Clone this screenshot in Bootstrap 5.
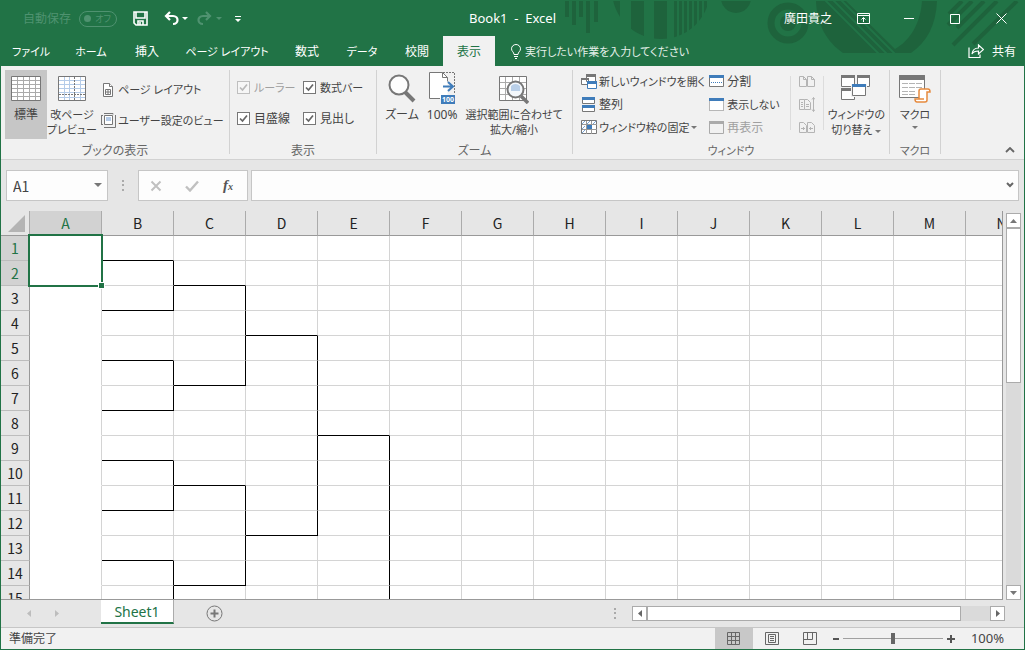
<!DOCTYPE html>
<html lang="ja">
<head>
<meta charset="utf-8">
<meta name="viewport" content="width=device-width, initial-scale=1">
<title>Book1 - Excel</title>
<link href="https://cdn.jsdelivr.net/npm/bootstrap@5.3.0/dist/css/bootstrap.min.css" rel="stylesheet">
<style>
  :root { --xl: #217346; --xl-dark: #1e633c; --line: #d4d4d4; --ink: #444; }
  body { font: 12px/15px "Noto Sans", "Noto Sans CJK JP", sans-serif; font-feature-settings: "palt"; color: var(--ink); }
  button, input { font: inherit; font-feature-settings: inherit; color: inherit; border: 0; background: none; padding: 0; border-radius: 0; }
  svg { display: block; flex: none; }
  .app { border: 1px solid var(--xl); background: #e6e6e6; }
  .nowrap { white-space: nowrap; }

  /* title bar and tabs */
  .top { background: var(--xl); color: #fff; height: 65px; }
  .deco { position: absolute; top: 0; right: 0; }
  .titlebar { display: grid; grid-template-columns: 1fr auto 1fr; height: 35px; }
  .doc-title { font-size: 13px; white-space: pre; }
  .autosave { color: #4f9270; margin-left: 22px; }
  .toggle { width: 38px; height: 16px; border: 1px solid #4f9270; border-radius: 8px; font-size: 9px; color: #4f9270; padding: 0 5px 0 4px; }
  .toggle i { width: 7px; height: 7px; border-radius: 50%; background: #4f9270; }
  .winbtn { width: 46px; height: 32px; }
  .tabs { height: 30px; }
  .tab { height: 30px; color: #fff; text-decoration: none; width: 52px; }
  .tab-m { width: 60px; }
  .tab-d { width: 58px; }
  .tab-l { width: 108px; }
  .tab.active { background: #f1f1f1; color: var(--xl); }
  .tell { color: #e6f0ea; font-size: 11px; }

  /* ribbon */
  .ribbon { background: #f1f1f1; height: 94px; border-bottom: 1px solid #d2d2d2; }
  .group { margin: 4px 0 5px; border-right: 1px solid #d2d2d2; }
  .group-body { height: 73px; }
  .group-name { color: #666; height: 15px; }
  .g-view { width: 229px; } .g-show { width: 147px; } .g-zoom { width: 196px; } .g-win { width: 317px; } .g-macro { width: 51px; }
  .big { height: 69px; display: flex; flex-direction: column; align-items: center; flex: none; white-space: nowrap; }
  .big .pic { height: 37px; display: flex; align-items: center; justify-content: center; flex: none; }
  .big.on { background: #c6c6c6; width: 42px; }
  .kana { font-size: 11px; }
  .row-btn { display: flex; align-items: center; white-space: nowrap; height: 23px; gap: 2px; }
  .tall { height: 31px; }
  .tall svg { width: 15px; }
  .off { color: #a0a0a0; }
  .caret { display: inline-block; border: 3px solid transparent; border-top-color: #777; border-bottom: 0; vertical-align: middle; }
  .vsep { width: 1px; height: 54px; background: #dcdcdc; margin-top: 6px; }
  .chk { appearance: none; width: 13px; height: 13px; margin: 0; border: 1px solid #777; background: #fff url("data:image/svg+xml,%3Csvg xmlns='http://www.w3.org/2000/svg' viewBox='0 0 11 11'%3E%3Cpath d='M2 5.5 4.5 8 9 2.5' fill='none' stroke='%23666' stroke-width='1.7'/%3E%3C/svg%3E") center/11px no-repeat; }
  .chk:disabled { opacity: .4; }
  .checks { display: grid; grid-template-columns: 66px auto; grid-auto-rows: 31px; align-items: center; padding: 2px 0 0 7px; }
  .checks label { display: flex; gap: 4px; align-items: center; white-space: nowrap; }

  /* formula bar */
  .fbar { height: 51px; padding: 10px 5px; }
  .fbox { background: #fdfdfd; border: 1px solid #c6c6c6; height: 31px; }
  .name-box { width: 102px; }
  .name-box input { width: 70px; font: 14px "Noto Sans CJK JP", sans-serif; padding-left: 6px; }
  .grip { margin: 0 14px; }
  .fx-box { width: 110px; margin-right: 3px; }
  .fbox input:focus { outline: 0; }

  /* sheet */
  .sheet { border-right: 1px solid #999; border-bottom: 1px solid #999; background: #fff; overflow: hidden; min-width: 0; }
  .cells { table-layout: fixed; border-collapse: separate; border-spacing: 0; width: 1037px; font: 14px/20px "Noto Sans CJK JP", sans-serif; color: #222; }
  .cells th { font-weight: 400; text-align: center; background: #e6e6e6; padding: 0; }
  .cells thead th { height: 25px; border-right: 1px solid #ababab; border-bottom: 1px solid #999; }
  .cells tbody th { border-right: 1px solid #999; border-bottom: 1px solid #bdbdbd; }
  .cells td { height: 25px; padding: 0; border-right: 1px solid var(--line); border-bottom: 1px solid var(--line); }
  .cells td.merged { border-bottom-color: #fff; }
  .cells td.bb { border-bottom-color: #000; }
  .cells td.br { border-right-color: #000; }
  .cells th.sel { background: #d2d2d2; color: var(--xl); }
  .cells thead th.corner { width: 29px; }
  .cursor { position: absolute; inset: -2px; border: 2px solid var(--xl); pointer-events: none; }
  .cursor::after { content: ""; position: absolute; right: -4px; bottom: -4px; width: 7px; height: 7px; background: var(--xl); border: 1px solid #fff; }
  .vbar { width: 15px; margin: 2px 3px 0 3px; background: #dadada; }
  .arrow { background: #fff; border: 1px solid #ababab; width: 15px; height: 15px; display: flex; align-items: center; justify-content: center; flex: none; }
  .thumb { background: #fff; border: 1px solid #ababab; }
  .vbar .thumb { height: 40%; }

  .sheetbar { height: 27px; }
  .sheet-nav { width: 100px; }
  .sheet-tab { width: 73px; height: 24px; background: #fff; border-right: 1px solid #ababab; border-bottom: 2px solid var(--xl); color: var(--xl); font-size: 14px; text-decoration: none; }
  .hbar { width: 373px; background: #dadada; height: 15px; margin-right: 19px; }
  .hbar .thumb { width: 314px; }
  .status { height: 22px; background: #f1f1f1; border-top: 1px solid #c6c6c6; }
  .percent { font-size: 13px; }
  .mode { width: 38px; height: 21px; }
  .mode.on { background: #c8c8c8; }
  .zoomer { appearance: none; width: 100px; height: 11px; background: linear-gradient(#a0a0a0, #a0a0a0) center/100% 1px no-repeat; }
  .zoomer::-webkit-slider-thumb { appearance: none; width: 4px; height: 11px; background: #666; }
</style>
</head>
<body>
<div class="app d-flex flex-column vh-100 overflow-hidden">

  <header class="top position-relative flex-shrink-0">
    <svg class="deco" width="460" height="60" viewBox="565 1 460 60" fill="#1e633c" aria-hidden="true">
      <defs>
        <clipPath id="c1"><circle cx="662" cy="-10" r="49"/></clipPath>
        <clipPath id="c2"><path d="M817 1C818 25 828 42 844 53H912C928 42 937 25 938 1z"/></clipPath>
      </defs>
      <path d="M566 1h4v16h-4zM573 1h4v24h-4zM580 1h4v16h-4zM587 1h4v32h-4zM595 1h4v21h-4z"/>
      <path clip-path="url(#c1)" d="M612 0h9v40h-9zM632 0h13v40h-13zM655 0h13v40h-13zM675 0h3v40h-3zM680 0h3v40h-3zM685 0h3v40h-3zM690 0h3v40h-3zM695 0h3v40h-3zM700 0h3v40h-3zM705 0h3v40h-3zM710 0h3v40h-3z"/>
      <circle cx="737" cy="-2" r="15"/>
      <circle cx="789" cy="23" r="17" fill="none" stroke="#1e633c" stroke-width="7"/><circle cx="789" cy="23" r="8"/>
      <g clip-path="url(#c2)">
        <path d="M817 0V53H938V0H923C922 22 912 40 896 49L846 0z"/>
        <path d="M826 0l54 54M834 0l54 54M842 0l54 54" stroke="#217346" stroke-width="2"/>
      </g>
      <g stroke="#1e633c" stroke-width="4"><path d="M963 1 950 14M973 1 949 25M985 1 958 28M998 1 954 45M1018 1 974 44"/></g>
    </svg>
    <div class="titlebar position-relative align-items-center">
      <div class="d-flex align-items-center">
        <span class="autosave nowrap">自動保存</span>
        <button class="toggle d-flex align-items-center justify-content-between ms-2" aria-label="自動保存 オフ"><i></i>オフ</button>
        <button class="ms-3" aria-label="上書き保存"><svg width="15" height="15" fill="none" stroke="#fff" stroke-width="1.6"><path d="M1 1h13v13H3l-2-2zM3 1v6h9V1M5 14v-4h5v4M7 11v3"/></svg></button>
        <button class="ms-3 d-flex align-items-center" aria-label="元に戻す"><svg width="24" height="15" viewBox="2 0 24 15" fill="none" stroke="#fff" stroke-width="2.2"><path d="M8 1 4 5l4 4M4 5h7c6 0 6 8 0 8"/><path d="M20 6h6l-3 3z" fill="#fff" stroke="none"/></svg></button>
        <button class="ms-2" aria-label="やり直し"><svg width="28" height="15" fill="none" stroke="#4f9270" stroke-width="2.2"><path d="M10 1l4 4-4 4M14 5H7c-6 0-6 8 0 8"/><path d="M20 6h6l-3 3z" fill="#4f9270" stroke="none"/></svg></button>
        <button class="ms-2" aria-label="クイック アクセス ツール バーのユーザー設定"><svg width="12" height="10" fill="#fff"><path d="M3 2h6v1H3zM3 5h6L6 8z"/></svg></button>
      </div>
      <div class="doc-title">Book1  -  Excel</div>
      <div class="d-flex align-items-center justify-content-end">
        <span class="nowrap me-2">廣田貴之</span>
        <button class="winbtn d-flex align-items-center justify-content-center" aria-label="リボンの表示オプション"><svg width="13" height="11" fill="none" stroke="#fff"><path d="M.5.5h12v10H.5zM.5 2.500h12M6.500 9V4.500M4.500 6.500l2-2 2 2"/></svg></button>
        <button class="winbtn d-flex align-items-center justify-content-center" aria-label="最小化"><svg width="10" height="1"><path fill="#fff" d="M0 0h10v1H0z"/></svg></button>
        <button class="winbtn d-flex align-items-center justify-content-center" aria-label="最大化"><svg width="10" height="10"><path d="M.5.5h9v9h-9z" fill="none" stroke="#fff"/></svg></button>
        <button class="winbtn d-flex align-items-center justify-content-center" aria-label="閉じる"><svg width="11" height="11"><path d="M.5.5l10 10M10.500.5l-10 10" stroke="#fff"/></svg></button>
      </div>
    </div>
    <nav class="tabs d-flex position-relative nowrap">
      <a href="#" class="tab tab-m kana d-flex align-items-center justify-content-center">ファイル</a>
      <a href="#" class="tab tab-m kana d-flex align-items-center justify-content-center">ホーム</a>
      <a href="#" class="tab d-flex align-items-center justify-content-center">挿入</a>
      <a href="#" class="tab tab-l kana d-flex align-items-center justify-content-center">ページ レイアウト</a>
      <a href="#" class="tab d-flex align-items-center justify-content-center">数式</a>
      <a href="#" class="tab tab-d kana d-flex align-items-center justify-content-center">データ</a>
      <a href="#" class="tab d-flex align-items-center justify-content-center">校閲</a>
      <a href="#" class="tab active d-flex align-items-center justify-content-center">表示</a>
      <button class="tell d-flex align-items-center gap-1 ms-3"><svg width="10" height="15" fill="none" stroke="#fff"><path d="M3 10.500C3 8 .5 7.500.5 4.800a4.500 4.300 0 0 1 9 0C9.500 7.500 7 8 7 10.500zM3 12.500h4M4 14.500h2"/></svg>実行したい作業を入力してください</button>
      <button class="d-flex align-items-center gap-2 ms-auto me-2"><svg width="16" height="14" fill="none" stroke="#fff" stroke-width="1.200"><path d="M1 3.500v10h11v-3M4 10C4.500 6 7 4 10.500 4V1l5 4.500-5 4.500V7C8 7 5.500 7.500 4 10z"/></svg>共有</button>
    </nav>
  </header>

  <section class="ribbon d-flex flex-shrink-0">
    <div class="group g-view flex-shrink-0">
      <div class="group-body d-flex ps-1">
        <button class="big on"><span class="pic"><svg width="30" height="25"><path fill="#fff" stroke="#777" d="M.5.5h29v24H.5z"/><path stroke="#aaa" d="M1 4.500h28M1 8.500h28M1 12.500h28M1 16.500h28M1 20.500h28M6.500 1v23M12.500 1v23M18.500 1v23M24.500 1v23"/></svg></span>標準</button>
        <button class="big kana"><span class="pic"><svg width="28" height="25"><path fill="#fff" stroke="#777" d="M.5.5h27v24H.5z"/><path stroke="#b4cbe8" d="M1 4.500h26M1 8.500h26M1 12.500h26M1 16.500h26M1 21.500h26M6.500 1v23M11.500 1v23M22.500 1v23"/><path stroke="#777" stroke-dasharray="2 1" d="M16.500 1v23M1 18.500h26"/></svg></span>改ページ<br>プレビュー</button>
        <div class="ms-1">
          <button class="row-btn tall kana mt-1"><svg width="15" height="14" viewBox="0 0 15 14" fill="#fff" stroke="#777"><path d="M2.500.5h6l3 3v10h-9z"/><path d="M8.500.5v3h3M4.500 6.500h5v5h-5zM7 6.500v5M4.500 9h5"/></svg>ページ レイアウト</button>
          <button class="row-btn tall kana"><svg width="15" height="15" fill="none" stroke="#777"><path fill="#fff" d="M3.500 2.500h8v9h-8z"/><path d="M3 .5h9M.5 3v8M0 2.500h2M0 11.500h2M14.500 2v12.500H3M12 .5v1"/><path fill="#b4cbe8" stroke="none" d="M5 4h5v4H5z"/></svg>ユーザー設定のビュー</button>
        </div>
      </div>
      <div class="group-name text-center">ブックの表示</div>
    </div>
    <div class="group g-show flex-shrink-0">
      <div class="group-body">
        <div class="checks">
          <label class="off kana"><input class="chk" type="checkbox" checked disabled>ルーラー</label>
          <label class="kana"><input class="chk" type="checkbox" checked>数式バー</label>
          <label><input class="chk" type="checkbox" checked>目盛線</label>
          <label><input class="chk" type="checkbox" checked>見出し</label>
        </div>
      </div>
      <div class="group-name text-center">表示</div>
    </div>
    <div class="group g-zoom flex-shrink-0">
      <div class="group-body d-flex ps-2">
        <button class="big"><span class="pic"><svg width="30" height="30" fill="none" stroke="#777"><path d="M18 18l9 9" stroke-width="4"/><circle cx="12" cy="11" r="9.500" fill="#fdfdfd" stroke-width="2"/></svg></span>ズーム</button>
        <button class="big ms-2"><span class="pic"><svg width="28" height="33" fill="none"><path d="M15 .5h11.500V22" stroke="#777" stroke-dasharray="2 1"/><path d="M1.500.5h13l5 5v21h-18z" fill="#fff"/><path d="M12 26.500H1.500V.5h13l5 5v4M14.500.5v5h5" stroke="#777"/><path d="M15 14.500h9M20 10l5 4.500-5 4.500" stroke="#3f7cba" stroke-width="2"/><path d="M13 23h14v9H13z" fill="#3f7cba"/><text x="20" y="30" font-size="7" font-weight="700" text-anchor="middle" fill="#fff">100</text></svg></span>100%</button>
        <button class="big ms-2 kana"><span class="pic"><svg width="30" height="30" fill="none" stroke="#aaa"><path d="M.5 2.500h27v24H.5z" fill="#fff" stroke="#777"/><path d="M1 8.500h26M1 14.500h26M1 20.500h26M6.500 3v23M13.500 3v23M20.500 3v23"/><path d="M22 22l7 7" stroke="#777" stroke-width="3.500"/><circle cx="16.500" cy="15.500" r="8" fill="#f4f8fc" stroke="#777" stroke-width="2"/><path d="M12 12a6 6 0 0 1 9 0v5h-9z" fill="#b9cfe8" stroke="none"/></svg></span>選択範囲に合わせて<br>拡大/縮小</button>
      </div>
      <div class="group-name text-center">ズーム</div>
    </div>
    <div class="group g-win flex-shrink-0">
      <div class="group-body d-flex">
        <div class="ms-2">
          <button class="row-btn kana"><svg width="16" height="15"><path fill="#fff" stroke="#777" d="M5.500.5h9v7h-9zM.5 5.500h7v5h-7z"/><path fill="#777" d="M5 0h10v3H5zM0 4h8v2H0z"/><path fill="#fff" stroke="#3f7cba" d="M6.500 8.500h9v6h-9z"/><path fill="#3f7cba" d="M6 7h10v3H6z"/></svg>新しいウィンドウを開く</button>
          <button class="row-btn"><svg width="16" height="15"><path fill="#fff" stroke="#777" d="M1.500.5h12v6h-12zM1.500 8.500h12v6h-12z"/><path fill="#3f7cba" d="M1 0h13v3H1zM1 8h13v3H1z"/></svg>整列</button>
          <button class="row-btn kana"><svg width="16" height="15"><path fill="#fff" stroke="#777" d="M.5.5h15v13H.5z"/><path stroke="#999" d="M5.500 1v13M10.500 1v13M1 4.500h15M1 9.500h15"/><path stroke="#7ba5d4" d="M1 4l3-3M6 4l3-3M12 4l3-3M1 9l3-3M1 13l3-3"/><path fill="#3f7cba" d="M6 5h5v4H6z"/></svg>ウィンドウ枠の固定 <span class="caret"></span></button>
        </div>
        <div class="ms-1">
          <button class="row-btn"><svg width="16" height="13"><path fill="#fff" stroke="#777" d="M.5.5h14v11H.5z"/><path fill="#3f7cba" d="M0 0h15v3H0z"/><path stroke="#3f7cba" stroke-dasharray="1 1" d="M2 7.500h12"/></svg>分割</button>
          <button class="row-btn kana"><svg width="16" height="14"><path fill="#fff" stroke="#777" stroke-dasharray="1 1" d="M.5.5h14v12H.5z"/><path fill="#3f7cba" d="M0 0h15v3H0z"/></svg>表示しない</button>
          <button class="row-btn off" disabled><svg width="16" height="14"><path fill="#f1f1f1" stroke="#aaa" d="M.5.5h14v12H.5z"/><path fill="#aaa" d="M0 0h15v3H0z"/></svg>再表示</button>
        </div>
        <div class="vsep ms-auto"></div>
        <div class="px-2">
          <button class="row-btn" disabled aria-label="並べて比較"><svg width="16" height="12" fill="none" stroke="#b4b4b4"><path d="M.5.5h4l3 3v7h-7zM8.500.5h4l3 3v7h-7zM4.500.5v3h3M12.500.5v3h3"/></svg></button>
          <button class="row-btn" disabled aria-label="同時にスクロール"><svg width="16" height="15" fill="none" stroke="#b4b4b4"><path d="M.5 2.500h5v10h-5zM5.500 2.500h3l3 3v7h-6M2 5.500h2M2 7.500h2M2 9.500h2M7 7.500h3M7 9.500h3M14.500.5v14M13 2.500l1.500-2 1.500 2M13 12.500l1.500 2 1.500-2"/></svg></button>
          <button class="row-btn" disabled aria-label="ウィンドウの位置を元に戻す"><svg width="16" height="12" fill="none" stroke="#b4b4b4"><path d="M.5.5h4l3 3v7h-7zM8.500.5h4l3 3v7h-7zM2 6.500h4M10 6.500h4M4.500 5v3M11.500 5v3"/></svg></button>
        </div>
        <div class="vsep"></div>
        <button class="big kana px-1"><span class="pic"><svg width="30" height="27" fill="#fff" stroke="#777"><path d="M.5 1.500h13v10H.5zM16.500 1.500h12v10h-12zM.5 14.500h13v10H.5z"/><path fill="#777" stroke="none" d="M0 0h14v3H0zM16 0h13v3H16zM0 13h14v3H0z"/><path stroke="#f1f1f1" stroke-width="3" d="M11.500 10.500h13v10h-13z"/><path d="M11.500 10.500h13v10h-13z"/><path fill="#3f7cba" stroke="none" d="M11 9h14v3H11z"/></svg></span>ウィンドウの<span>切り替え <span class="caret"></span></span></button>
      </div>
      <div class="group-name kana text-center">ウィンドウ</div>
    </div>
    <div class="group g-macro flex-shrink-0">
      <div class="group-body d-flex justify-content-center">
        <button class="big kana"><span class="pic"><svg width="32" height="28" fill="#fff" stroke="#777"><path d="M.5.5h25v22H.5z"/><path fill="#777" d="M.5.5h25v4H.5z"/><path stroke="#b4b4b4" d="M3 8.500h6M10 8.500h6M17 8.500h6M3 12.500h6M10 12.500h6M17 12.500h6M3 16.500h6M10 16.500h6M3 19.500h6M10 19.500h6"/><path stroke="#e68a3e" stroke-width="1.500" d="M20 24V16q0-2 2-2h7q2 0 2 3h-3v8q0 2-2 2h-8q-2 0-2-3h9"/></svg></span>マクロ<span class="caret mt-1"></span></button>
      </div>
      <div class="group-name kana text-center">マクロ</div>
    </div>
    <button class="ms-auto align-self-end me-1 p-1" aria-label="リボンを折りたたむ"><svg width="12" height="8" fill="none" stroke="#666" stroke-width="1.800"><path d="M2 5l4-4 4 4"/></svg></button>
  </section>

  <section class="fbar d-flex flex-shrink-0 align-items-center">
    <div class="fbox name-box d-flex align-items-center justify-content-between">
      <input type="text" value="A1" aria-label="名前ボックス">
      <svg class="me-1" width="10" height="5"><path fill="#777" d="M1 0h8L5 4z"/></svg>
    </div>
    <svg class="grip" width="2" height="11" fill="#aaa"><path d="M0 0h2v2H0zM0 4h2v2H0zM0 9h2v2H0z"/></svg>
    <div class="fbox fx-box d-flex align-items-center justify-content-around">
      <button aria-label="キャンセル"><svg width="12" height="12"><path d="M1.500 1.500l9 9M10.500 1.500l-9 9" stroke="#c0c0c0" stroke-width="2"/></svg></button>
      <button aria-label="入力"><svg width="14" height="12"><path d="M1 6.500l4 4 8-9" fill="none" stroke="#c0c0c0" stroke-width="2.400"/></svg></button>
      <button aria-label="関数の挿入"><svg width="14" height="16"><text x="1" y="12" font-family="Liberation Serif" font-style="italic" font-weight="700" font-size="15" fill="#555">f<tspan font-size="10">x</tspan></text></svg></button>
    </div>
    <div class="fbox d-flex flex-grow-1 align-items-center">
      <input class="flex-grow-1 px-2" type="text" aria-label="数式バー">
      <svg class="me-1" width="8" height="7" fill="none" stroke="#666" stroke-width="2"><path d="M1 1l3 3 3-3"/></svg>
    </div>
  </section>

  <main class="d-flex flex-grow-1 overflow-hidden">
    <div class="sheet flex-grow-1">
      <table class="cells" id="cells">
        <thead><tr></tr></thead>
        <tbody></tbody>
      </table>
    </div>
    <div class="vbar d-flex flex-column flex-shrink-0">
      <button class="arrow" aria-label="上へ"><svg width="7" height="4"><path fill="#777" d="M0 4h7L3.500 0z"/></svg></button>
      <div class="thumb"></div>
      <button class="arrow mt-auto" aria-label="下へ"><svg width="7" height="4"><path fill="#777" d="M0 0h7L3.500 4z"/></svg></button>
    </div>
  </main>

  <div class="sheetbar d-flex flex-shrink-0">
    <div class="sheet-nav d-flex align-items-center justify-content-center gap-4 pe-3">
      <button aria-label="前のシート"><svg width="5" height="7"><path fill="#bdbdbd" d="M5 0v7L1 3.500z"/></svg></button>
      <button aria-label="次のシート"><svg width="5" height="7"><path fill="#bdbdbd" d="M0 0v7l4-3.500z"/></svg></button>
    </div>
    <a href="#" class="sheet-tab d-flex align-items-center justify-content-center">Sheet1</a>
    <button class="px-2 mx-4" aria-label="新しいシート"><svg width="17" height="17" fill="none" stroke="#777"><circle cx="8.500" cy="8.500" r="7.500"/><path stroke-width="2" d="M8.500 4.500v8M4.500 8.500h8"/></svg></button>
    <div class="d-flex align-items-center ms-auto">
      <svg class="me-3" width="2" height="11" fill="#aaa"><path d="M0 0h2v2H0zM0 4h2v2H0zM0 9h2v2H0z"/></svg>
      <div class="hbar d-flex">
        <button class="arrow" aria-label="左へ"><svg width="4" height="7"><path fill="#666" d="M4 0v7L0 3.500z"/></svg></button>
        <div class="thumb"></div>
        <button class="arrow ms-auto" aria-label="右へ"><svg width="4" height="7"><path fill="#666" d="M0 0v7l4-3.500z"/></svg></button>
      </div>
    </div>
  </div>

  <footer class="status d-flex flex-shrink-0 align-items-center">
    <span class="ms-2 me-auto">準備完了</span>
    <button class="mode on d-flex align-items-center justify-content-center" aria-label="標準"><svg width="13" height="13" fill="none" stroke="#666"><path d="M.5.5h12v12H.5zM4.500 0v13M8.500 0v13M0 4.500h13M0 8.500h13"/></svg></button>
    <button class="mode d-flex align-items-center justify-content-center" aria-label="ページ レイアウト"><svg width="14" height="13" fill="none" stroke="#666"><path d="M.5.5h13v12H.5zM3.500 2.500h7v8h-7zM5 4.500h4M5 6.500h4M5 8.500h4"/></svg></button>
    <button class="mode d-flex align-items-center justify-content-center" aria-label="改ページ プレビュー"><svg width="14" height="13" fill="none" stroke="#666"><path d="M.5.5h13v12H.5zM4.500 0v7.500M9.500 0v7.500M0 7.500h9.500"/></svg></button>
    <button class="ms-1" aria-label="縮小"><svg width="6" height="2"><path fill="#555" d="M0 0h6v2H0z"/></svg></button>
    <input class="zoomer mx-1" type="range" min="0" max="100" value="50" aria-label="ズーム">
    <button aria-label="拡大"><svg width="8" height="8"><path fill="#555" d="M3 0h2v3h3v2H5v3H3V5H0V3h3z"/></svg></button>
    <span class="percent ms-3 me-3 pe-1">100%</span>
  </footer>
</div>

<script src="https://cdn.jsdelivr.net/npm/bootstrap@5.3.0/dist/js/bootstrap.bundle.min.js"></script>
<script>
  // Tournament bracket: [column, first row, last row] of each connector's vertical line
  const brackets = [['B',2,3],['B',6,7],['B',10,11],['B',14,15],['C',3,6],['C',11,14],['D',5,12],['E',9,24]];
  const cols = [...'ABCDEFGHIJKLMN'];
  const table = document.getElementById('cells');
  table.tHead.rows[0].innerHTML =
    '<th class="corner"><svg class="ms-auto me-1" width="17" height="17"><path fill="#b4b4b4" d="M17 0v17H0z"/></svg></th>' +
    cols.map(c => `<th scope="col" class="${c === 'A' ? 'sel' : ''}">${c}</th>`).join('');
  let html = '';
  for (let r = 1; r <= 15; r++) {
    html += `<tr><th scope="row" class="${r < 3 ? 'sel' : ''}">${r}</th>`;
    for (const c of cols) {
      if (c === 'A') {
        if (r === 1) html += '<td rowspan="2" class="position-relative"><div class="cursor"></div></td>';
        else if (r > 2) html += '<td class="merged"></td>';
        continue;
      }
      const cls = [];
      for (const [bc, first, last] of brackets) {
        if (bc !== c) continue;
        if (r === first - 1 || r === last) cls.push('bb');
        if (r >= first && r <= last) cls.push('br');
      }
      html += `<td class="${cls.join(' ')}"></td>`;
    }
    html += '</tr>';
  }
  table.tBodies[0].innerHTML = html;
</script>
</body>
</html>
